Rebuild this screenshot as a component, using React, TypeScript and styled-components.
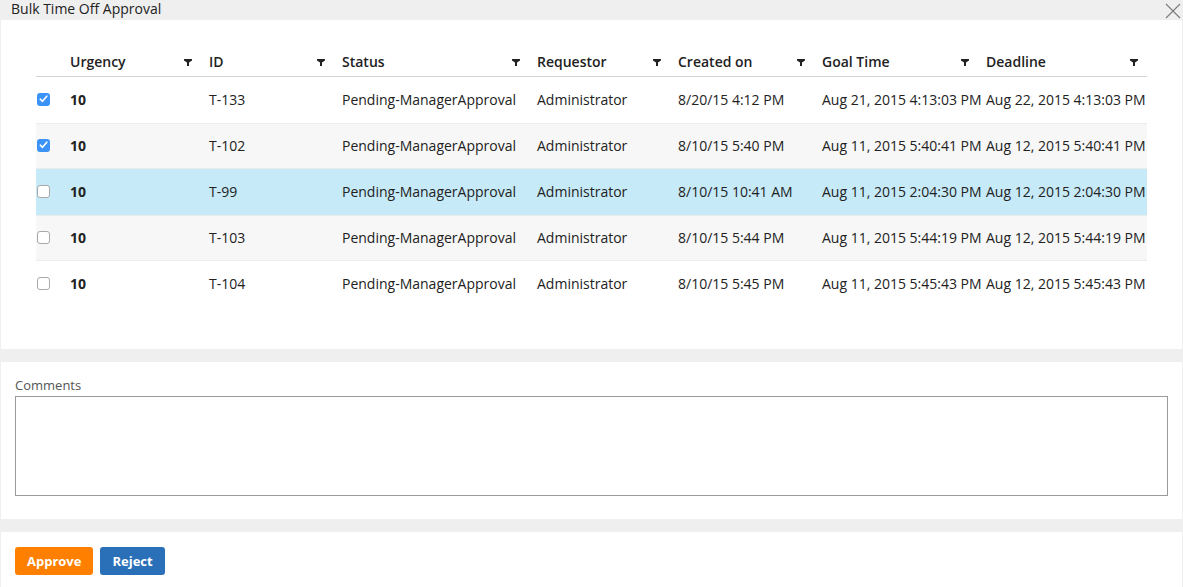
import React from 'react'
import styled, { createGlobalStyle } from 'styled-components'

interface Row {
    urgency: number
    id: string
    status: string
    requestor: string
    created: string
    goal: string
    deadline: string
    checked: boolean
}

const COLUMNS = [
    { label: 'Urgency', width: 139 },
    { label: 'ID', width: 133 },
    { label: 'Status', width: 195 },
    { label: 'Requestor', width: 141 },
    { label: 'Created on', width: 144 },
    { label: 'Goal Time', width: 164 },
    { label: 'Deadline', width: 169 },
]

const ROWS: Row[] = [
    { urgency: 10, id: 'T-133', status: 'Pending-ManagerApproval', requestor: 'Administrator', created: '8/20/15 4:12 PM', goal: 'Aug 21, 2015 4:13:03 PM', deadline: 'Aug 22, 2015 4:13:03 PM', checked: true },
    { urgency: 10, id: 'T-102', status: 'Pending-ManagerApproval', requestor: 'Administrator', created: '8/10/15 5:40 PM', goal: 'Aug 11, 2015 5:40:41 PM', deadline: 'Aug 12, 2015 5:40:41 PM', checked: true },
    { urgency: 10, id: 'T-99', status: 'Pending-ManagerApproval', requestor: 'Administrator', created: '8/10/15 10:41 AM', goal: 'Aug 11, 2015 2:04:30 PM', deadline: 'Aug 12, 2015 2:04:30 PM', checked: false },
    { urgency: 10, id: 'T-103', status: 'Pending-ManagerApproval', requestor: 'Administrator', created: '8/10/15 5:44 PM', goal: 'Aug 11, 2015 5:44:19 PM', deadline: 'Aug 12, 2015 5:44:19 PM', checked: false },
    { urgency: 10, id: 'T-104', status: 'Pending-ManagerApproval', requestor: 'Administrator', created: '8/10/15 5:45 PM', goal: 'Aug 11, 2015 5:45:43 PM', deadline: 'Aug 12, 2015 5:45:43 PM', checked: false },
]

const FilterIcon = () => (
    <svg width="8" height="7" viewBox="0 0 8 7">
        <path d="M0 0 H8 V1.5 L5 3.5 V7 H3 V3.5 L0 1.5 Z" fill="#222" />
    </svg>
)

const CloseIcon = () => (
    <svg width="16" height="16" viewBox="0 0 16 16">
        <path d="M1 1 L15 15 M15 1 L1 15" stroke="#7a7a7a" strokeWidth="1.1" />
    </svg>
)

const Check = ({ checked }: { checked: boolean }) => (
    <CheckBox checked={checked}>
        {checked && (
            <svg width="9" height="8" viewBox="0 0 9 8">
                <path d="M1.3 4.2 L3.5 6.3 L7.8 1.2" stroke="#fff" strokeWidth="1.6" fill="none" strokeLinecap="round" strokeLinejoin="round" />
            </svg>
        )}
    </CheckBox>
)

const App = () => {
    const highlighted = 2

    return (
        <>
            <GlobalStyle />
            <Dialog>
                <TitleBar>
                    <Title>Bulk Time Off Approval</Title>
                    <CloseButton>
                        <CloseIcon />
                    </CloseButton>
                </TitleBar>

                <Panel>
                    <TableWrap>
                        <HeaderRow>
                            <CheckCell />
                            {COLUMNS.map((col) => (
                                <HeaderCell key={col.label} style={{ width: col.width }}>
                                    <span>{col.label}</span>
                                    <FilterIcon />
                                </HeaderCell>
                            ))}
                        </HeaderRow>
                        {ROWS.map((row, i) => (
                            <DataRow key={row.id} striped={i % 2 === 1} active={i === highlighted}>
                                <CheckCell>
                                    <Check checked={row.checked} />
                                </CheckCell>
                                <Cell style={{ width: COLUMNS[0].width }} bold>
                                    {row.urgency}
                                </Cell>
                                <Cell style={{ width: COLUMNS[1].width }}>{row.id}</Cell>
                                <Cell style={{ width: COLUMNS[2].width }}>{row.status}</Cell>
                                <Cell style={{ width: COLUMNS[3].width }}>{row.requestor}</Cell>
                                <Cell style={{ width: COLUMNS[4].width }}>{row.created}</Cell>
                                <Cell style={{ width: COLUMNS[5].width }}>{row.goal}</Cell>
                                <Cell style={{ width: COLUMNS[6].width }}>{row.deadline}</Cell>
                            </DataRow>
                        ))}
                    </TableWrap>
                </Panel>

                <CommentsPanel>
                    <Label>Comments</Label>
                    <Comments />
                </CommentsPanel>

                <ButtonsPanel>
                    <Button color="#ff8000">Approve</Button>
                    <Button color="#2a70b8">Reject</Button>
                </ButtonsPanel>
            </Dialog>
        </>
    )
}

export default App

const GlobalStyle = createGlobalStyle`
    html, body {
        margin: 0;
        padding: 0;
        background: #ffffff;
    }
    body {
        font-family: 'Open Sans', 'Liberation Sans', sans-serif;
        color: #222;
    }
`

const Dialog = styled.div`
    width: 1183px;
    height: 587px;
    background: #efefef;
    display: flex;
    flex-direction: column;
    overflow: hidden;
`

const TitleBar = styled.div`
    height: 20px;
    display: flex;
    align-items: center;
    justify-content: space-between;
    padding: 0 2px 0 11px;
`

const Title = styled.div`
    font-size: 14px;
    line-height: 18px;
    color: #222;
    margin-top: -3px;
`

const CloseButton = styled.div`
    width: 16px;
    height: 16px;
    margin-top: 1px;
    display: flex;
`

const Panel = styled.div`
    background: #fff;
    margin: 0 1px 0 1px;
    height: 329px;
    padding: 33px 35px 0 35px;
    box-sizing: border-box;
`

const TableWrap = styled.div`
    width: 1111px;
`

const HeaderRow = styled.div`
    display: flex;
    height: 23px;
    border-bottom: 1px solid #d4d4d4;
    font-weight: 600;
    font-size: 14px;
`

const CheckCell = styled.div`
    width: 26px;
    flex: 0 0 26px;
    display: flex;
    align-items: center;
    padding-left: 1px;
    box-sizing: border-box;
`

const HeaderCell = styled.div`
    display: flex;
    align-items: flex-start;
    justify-content: space-between;
    padding: 0 9px 0 8px;
    box-sizing: border-box;
    flex: 0 0 auto;
    line-height: 17px;
    color: #222;

    & svg {
        margin-top: 6px;
    }
`

const DataRow = styled.div<{ striped: boolean; active: boolean }>`
    display: flex;
    height: 46px;
    box-sizing: border-box;
    align-items: center;
    padding-bottom: 2px;
    font-size: 14px;
    background: ${(p) => (p.active ? '#c7eaf8' : p.striped ? '#f7f7f7' : '#fff')};
    border-top: ${(p) => (p.striped ? '1px solid #ececec' : 'none')};
    border-bottom: ${(p) => (p.striped ? '1px solid #ececec' : 'none')};
`

const Cell = styled.div<{ bold?: boolean }>`
    padding: 0 0 0 8px;
    box-sizing: border-box;
    flex: 0 0 auto;
    white-space: nowrap;
    font-weight: ${(p) => (p.bold ? 700 : 400)};
    color: #222;
`

const CheckBox = styled.span<{ checked: boolean }>`
    width: 13px;
    height: 13px;
    box-sizing: border-box;
    border-radius: 3px;
    display: flex;
    align-items: center;
    justify-content: center;
    background: ${(p) => (p.checked ? '#3b93f7' : '#fff')};
    border: ${(p) => (p.checked ? 'none' : '1px solid #a9a9a9')};
`

const CommentsPanel = styled.div`
    background: #fff;
    margin: 13px 1px 0 1px;
    height: 157px;
    padding: 14px 14px 0 14px;
    box-sizing: border-box;
`

const Label = styled.div`
    font-size: 13px;
    line-height: 18px;
    color: #555;
    margin-bottom: 2px;
`

const Comments = styled.textarea`
    display: block;
    width: 1153px;
    height: 100px;
    box-sizing: border-box;
    border: 1px solid #9a9a9a;
    resize: none;
    outline: none;
    font-family: inherit;
    margin: 0;
`

const ButtonsPanel = styled.div`
    background: #fff;
    margin: 13px 1px 0 1px;
    flex: 1;
    display: flex;
    gap: 7px;
    padding: 15px 14px 0 14px;
    align-items: flex-start;
`

const Button = styled.button<{ color: string }>`
    height: 28px;
    padding: 0 12px;
    border: none;
    border-radius: 3px;
    background: ${(p) => p.color};
    color: #fff;
    font-family: 'Open Sans', 'Liberation Sans', sans-serif;
    font-weight: 700;
    font-size: 13px;
    cursor: pointer;
`
